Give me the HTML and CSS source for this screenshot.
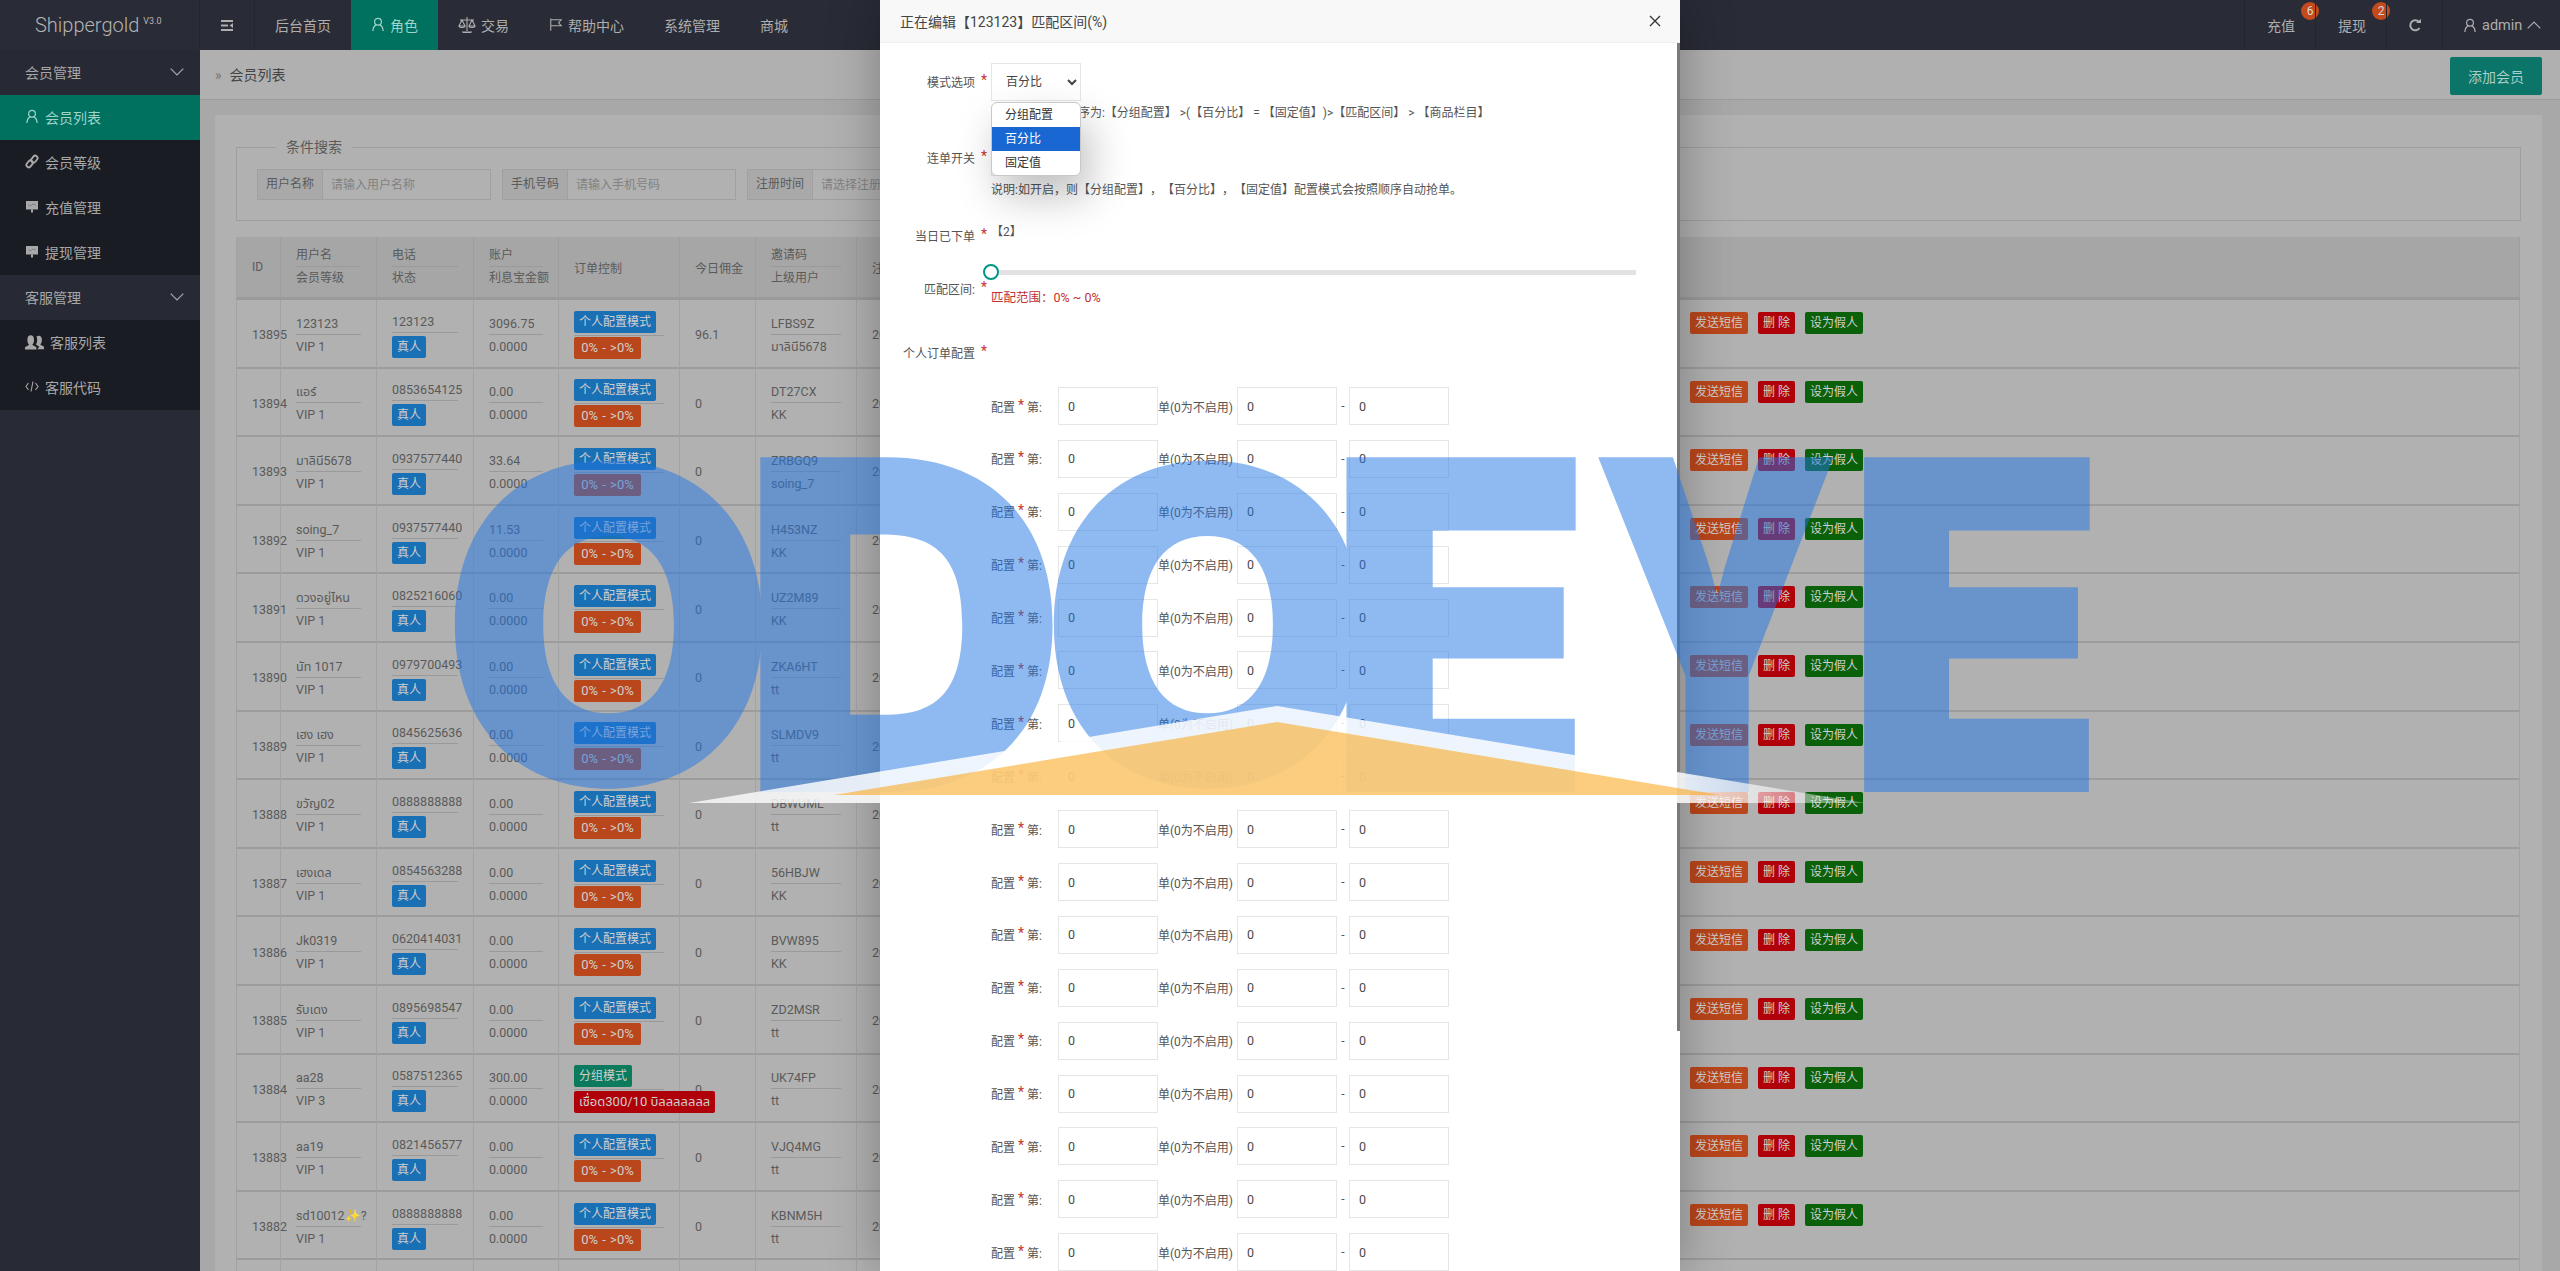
FILE: index.html
```html
<!DOCTYPE html>
<html lang="zh-CN">
<head>
  <meta charset="UTF-8" />
  <title>Shippergold - 会员列表</title>
  <link rel="stylesheet" href="styles.css">
</head>
<body>
  <svg class="icon-defs" width="0" height="0">
    <symbol id="i-user" viewBox="0 0 14 16"><circle cx="7" cy="5" r="3.6" fill="none" stroke="currentColor" stroke-width="1.3"/><path d="M1.5 15c.3-3.6 2-6 3.6-6.6M12.5 15c-.3-3.6-2-6-3.6-6.6" fill="none" stroke="currentColor" stroke-width="1.3"/></symbol>
    <symbol id="i-link" viewBox="0 0 14 16"><g fill="none" stroke="currentColor" stroke-width="2"><rect x="7" y="1.5" width="5" height="8" rx="2.5" transform="rotate(38 9.5 5.5)"/><rect x="2" y="6.5" width="5" height="8" rx="2.5" transform="rotate(38 4.5 10.5)"/></g></symbol>
    <symbol id="i-board" viewBox="0 0 14 14"><rect x="1" y="1.5" width="12" height="8.5" fill="currentColor"/><path d="M3 5l2 1.5 3-2 3 1" fill="none" stroke="#777" stroke-width=".8"/><rect x="6" y="10" width="2" height="3" fill="currentColor"/></symbol>
    <symbol id="i-users" viewBox="0 0 20 16"><path d="M0 16v-2.500l4.500-2.500c-1.500-1.500-2-3-2-5.500C2.500 2.500 4 1 6 1s3.500 1.500 3.500 4.500c0 2.500-.5 4-2 5.500l4.500 2.500V16z" fill="currentColor"/><path d="M13 15.500h7V13l-4-2.300c1.300-1.400 1.800-2.800 1.800-5C17.800 3 16.400 1.500 14.500 1.500c-1 0-1.800.4-2.400 1 .5 1 .7 2 .7 3.200 0 2-.4 3.500-1.300 4.900l3.500 2.400z" fill="currentColor"/></symbol>
    <symbol id="i-code" viewBox="0 0 14 12"><path d="M3.500 2.500L1 6l2.500 3.500M10.500 2.500L13 6l-2.500 3.500M8 1L6 11" fill="none" stroke="currentColor" stroke-width="1.100"/></symbol>
    <symbol id="i-scale" viewBox="0 0 18 18"><g fill="none" stroke="currentColor" stroke-width="1.100"><path d="M9 1v14M5 16.500h8M2 4h14M4 4L1 10h6zM14 4l-3 6h6z"/><path d="M1 10c.5 2 5.500 2 6 0M11 10c.5 2 5.500 2 6 0M4 16h10"/></g></symbol>
    <symbol id="i-flag" viewBox="0 0 16 16"><path d="M2 1v14M2 2.500h12l-3 3.500 3 3.500H2" fill="none" stroke="currentColor" stroke-width="1.200"/></symbol>
    <symbol id="i-menu" viewBox="0 0 14 14"><path d="M1 2.500h12M1 7h7M1 11.500h12" fill="none" stroke="currentColor" stroke-width="2"/><path d="M13 4.500L9.500 7l3.500 2.500z" fill="currentColor"/></symbol>
    <symbol id="i-refresh" viewBox="0 0 14 14"><path d="M11.500 9.500A5 5 0 1 1 11 3.500" fill="none" stroke="currentColor" stroke-width="2"/><path d="M8 4.500h5v-4z" fill="currentColor"/></symbol>
    <symbol id="i-down" viewBox="0 0 14 8"><path d="M.7 .7L7 7 13.300 .7" fill="none" stroke="currentColor" stroke-width="1.200"/></symbol>
    <symbol id="i-up" viewBox="0 0 14 8"><path d="M.7 7.300L7 1l6.300 6.300" fill="none" stroke="currentColor" stroke-width="1.200"/></symbol>
    <symbol id="i-close" viewBox="0 0 12 12"><path d="M1 1l10 10M11 1L1 11" fill="none" stroke="currentColor" stroke-width="1.300"/></symbol>
  </svg>

  <header class="topbar">
    <div class="logo">Shippergold<sup>V3.0</sup></div>
    <a class="nav-toggle"><svg class="ic-14"><use href="#i-menu"/></svg></a>
    <nav class="nav">
      <a>后台首页</a>
      <a class="active"><svg class="ic-14"><use href="#i-user"/></svg>角色</a>
      <a><svg class="ic-18"><use href="#i-scale"/></svg>交易</a>
      <a><svg class="ic-14"><use href="#i-flag"/></svg>帮助中心</a>
      <a>系统管理</a>
      <a>商城</a>
    </nav>
    <div class="top-right">
      <a class="top-link">充值<span class="dot">6</span></a>
      <a class="top-link">提现<span class="dot">2</span></a>
      <a class="top-link refresh"><svg class="ic-14"><use href="#i-refresh"/></svg></a>
      <a class="top-user"><svg class="ic-14"><use href="#i-user"/></svg>admin<svg class="ic-chev"><use href="#i-up"/></svg></a>
    </div>
  </header>

  <div class="main">
    <aside class="sidebar">
      <div class="side-group">会员管理<svg class="ic-chev"><use href="#i-down"/></svg></div>
      <a class="side-item active"><svg class="ic-14"><use href="#i-user"/></svg>会员列表</a>
      <a class="side-item"><svg class="ic-14"><use href="#i-link"/></svg>会员等级</a>
      <a class="side-item"><svg class="ic-14"><use href="#i-board"/></svg>充值管理</a>
      <a class="side-item"><svg class="ic-14"><use href="#i-board"/></svg>提现管理</a>
      <div class="side-group">客服管理<svg class="ic-chev"><use href="#i-down"/></svg></div>
      <a class="side-item"><svg class="ic-20"><use href="#i-users"/></svg>客服列表</a>
      <a class="side-item"><svg class="ic-14"><use href="#i-code"/></svg>客服代码</a>
    </aside>

    <main class="content">
      <div class="crumb">
        <span class="crumb-text"><i>»</i>会员列表</span>
        <button class="btn-add">添加会员</button>
      </div>

      <section class="card">
        <fieldset class="search">
          <legend>条件搜索</legend>
          <div class="search-row">
            <div class="search-group"><label>用户名称</label><input placeholder="请输入用户名称"></div>
            <div class="search-group"><label>手机号码</label><input placeholder="请输入手机号码"></div>
            <div class="search-group"><label>注册时间</label><input placeholder="请选择注册时间"></div>
          </div>
        </fieldset>

        <table class="members">
          <colgroup>
            <col class="c-id"><col class="c-name"><col class="c-phone"><col class="c-acc"><col class="c-order"><col class="c-today"><col class="c-code"><col class="c-reg"><col>
          </colgroup>
          <thead>
            <tr>
              <th>ID</th>
              <th><div class="pair"><div>用户名</div><div>会员等级</div></div></th>
              <th><div class="pair"><div>电话</div><div>状态</div></div></th>
              <th><div class="pair"><div>账户</div><div>利息宝金额</div></div></th>
              <th>订单控制</th>
              <th>今日佣金</th>
              <th><div class="pair"><div>邀请码</div><div>上级用户</div></div></th>
              <th>注册时间</th>
              <th></th>
            </tr>
          </thead>
          <tbody>
            <tr><td>13895</td><td><div class="pair"><div>123123</div><div>VIP 1</div></div></td><td><div class="phone"><div>123123</div><span class="tag blue">真人</span></div></td><td><div class="pair"><div>3096.75</div><div>0.0000</div></div></td><td><div class="modes"><div><span class="tag blue">个人配置模式</span></div><span class="tag orange">0% - &gt;0%</span></div></td><td>96.1</td><td><div class="pair"><div>LFBS9Z</div><div>มาลินี5678</div></div></td><td>2025-03-18</td><td class="ops"><span class="tag orange">发送短信</span><span class="tag red">删 除</span><span class="tag green">设为假人</span></td></tr>
            <tr><td>13894</td><td><div class="pair"><div>แอร์</div><div>VIP 1</div></div></td><td><div class="phone"><div>0853654125</div><span class="tag blue">真人</span></div></td><td><div class="pair"><div>0.00</div><div>0.0000</div></div></td><td><div class="modes"><div><span class="tag blue">个人配置模式</span></div><span class="tag orange">0% - &gt;0%</span></div></td><td>0</td><td><div class="pair"><div>DT27CX</div><div>KK</div></div></td><td>2025-03-18</td><td class="ops"><span class="tag orange">发送短信</span><span class="tag red">删 除</span><span class="tag green">设为假人</span></td></tr>
            <tr><td>13893</td><td><div class="pair"><div>มาลินี5678</div><div>VIP 1</div></div></td><td><div class="phone"><div>0937577440</div><span class="tag blue">真人</span></div></td><td><div class="pair"><div>33.64</div><div>0.0000</div></div></td><td><div class="modes"><div><span class="tag blue">个人配置模式</span></div><span class="tag orange">0% - &gt;0%</span></div></td><td>0</td><td><div class="pair"><div>ZRBGQ9</div><div>soing_7</div></div></td><td>2025-03-18</td><td class="ops"><span class="tag orange">发送短信</span><span class="tag red">删 除</span><span class="tag green">设为假人</span></td></tr>
            <tr><td>13892</td><td><div class="pair"><div>soing_7</div><div>VIP 1</div></div></td><td><div class="phone"><div>0937577440</div><span class="tag blue">真人</span></div></td><td><div class="pair"><div>11.53</div><div>0.0000</div></div></td><td><div class="modes"><div><span class="tag blue">个人配置模式</span></div><span class="tag orange">0% - &gt;0%</span></div></td><td>0</td><td><div class="pair"><div>H453NZ</div><div>KK</div></div></td><td>2025-03-18</td><td class="ops"><span class="tag orange">发送短信</span><span class="tag red">删 除</span><span class="tag green">设为假人</span></td></tr>
            <tr><td>13891</td><td><div class="pair"><div>ดวงอยู่ไหน</div><div>VIP 1</div></div></td><td><div class="phone"><div>0825216060</div><span class="tag blue">真人</span></div></td><td><div class="pair"><div>0.00</div><div>0.0000</div></div></td><td><div class="modes"><div><span class="tag blue">个人配置模式</span></div><span class="tag orange">0% - &gt;0%</span></div></td><td>0</td><td><div class="pair"><div>UZ2M89</div><div>KK</div></div></td><td>2025-03-18</td><td class="ops"><span class="tag orange">发送短信</span><span class="tag red">删 除</span><span class="tag green">设为假人</span></td></tr>
            <tr><td>13890</td><td><div class="pair"><div>นัท 1017</div><div>VIP 1</div></div></td><td><div class="phone"><div>0979700493</div><span class="tag blue">真人</span></div></td><td><div class="pair"><div>0.00</div><div>0.0000</div></div></td><td><div class="modes"><div><span class="tag blue">个人配置模式</span></div><span class="tag orange">0% - &gt;0%</span></div></td><td>0</td><td><div class="pair"><div>ZKA6HT</div><div>tt</div></div></td><td>2025-03-18</td><td class="ops"><span class="tag orange">发送短信</span><span class="tag red">删 除</span><span class="tag green">设为假人</span></td></tr>
            <tr><td>13889</td><td><div class="pair"><div>เฮง เฮง</div><div>VIP 1</div></div></td><td><div class="phone"><div>0845625636</div><span class="tag blue">真人</span></div></td><td><div class="pair"><div>0.00</div><div>0.0000</div></div></td><td><div class="modes"><div><span class="tag blue">个人配置模式</span></div><span class="tag orange">0% - &gt;0%</span></div></td><td>0</td><td><div class="pair"><div>SLMDV9</div><div>tt</div></div></td><td>2025-03-18</td><td class="ops"><span class="tag orange">发送短信</span><span class="tag red">删 除</span><span class="tag green">设为假人</span></td></tr>
            <tr><td>13888</td><td><div class="pair"><div>ขวัญ02</div><div>VIP 1</div></div></td><td><div class="phone"><div>0888888888</div><span class="tag blue">真人</span></div></td><td><div class="pair"><div>0.00</div><div>0.0000</div></div></td><td><div class="modes"><div><span class="tag blue">个人配置模式</span></div><span class="tag orange">0% - &gt;0%</span></div></td><td>0</td><td><div class="pair"><div>DBWUML</div><div>tt</div></div></td><td>2025-03-18</td><td class="ops"><span class="tag orange">发送短信</span><span class="tag red">删 除</span><span class="tag green">设为假人</span></td></tr>
            <tr><td>13887</td><td><div class="pair"><div>เฮงเดล</div><div>VIP 1</div></div></td><td><div class="phone"><div>0854563288</div><span class="tag blue">真人</span></div></td><td><div class="pair"><div>0.00</div><div>0.0000</div></div></td><td><div class="modes"><div><span class="tag blue">个人配置模式</span></div><span class="tag orange">0% - &gt;0%</span></div></td><td>0</td><td><div class="pair"><div>56HBJW</div><div>KK</div></div></td><td>2025-03-18</td><td class="ops"><span class="tag orange">发送短信</span><span class="tag red">删 除</span><span class="tag green">设为假人</span></td></tr>
            <tr><td>13886</td><td><div class="pair"><div>Jk0319</div><div>VIP 1</div></div></td><td><div class="phone"><div>0620414031</div><span class="tag blue">真人</span></div></td><td><div class="pair"><div>0.00</div><div>0.0000</div></div></td><td><div class="modes"><div><span class="tag blue">个人配置模式</span></div><span class="tag orange">0% - &gt;0%</span></div></td><td>0</td><td><div class="pair"><div>BVW895</div><div>KK</div></div></td><td>2025-03-18</td><td class="ops"><span class="tag orange">发送短信</span><span class="tag red">删 除</span><span class="tag green">设为假人</span></td></tr>
            <tr><td>13885</td><td><div class="pair"><div>รับเดง</div><div>VIP 1</div></div></td><td><div class="phone"><div>0895698547</div><span class="tag blue">真人</span></div></td><td><div class="pair"><div>0.00</div><div>0.0000</div></div></td><td><div class="modes"><div><span class="tag blue">个人配置模式</span></div><span class="tag orange">0% - &gt;0%</span></div></td><td>0</td><td><div class="pair"><div>ZD2MSR</div><div>tt</div></div></td><td>2025-03-18</td><td class="ops"><span class="tag orange">发送短信</span><span class="tag red">删 除</span><span class="tag green">设为假人</span></td></tr>
            <tr><td>13884</td><td><div class="pair"><div>aa28</div><div>VIP 3</div></div></td><td><div class="phone"><div>0587512365</div><span class="tag blue">真人</span></div></td><td><div class="pair"><div>300.00</div><div>0.0000</div></div></td><td><div class="modes"><div><span class="tag teal">分组模式</span></div><span class="tag red over">เชื่อด300/10 บิลลลลลลล</span></div></td><td>0</td><td><div class="pair"><div>UK74FP</div><div>tt</div></div></td><td>2025-03-18</td><td class="ops"><span class="tag orange">发送短信</span><span class="tag red">删 除</span><span class="tag green">设为假人</span></td></tr>
            <tr><td>13883</td><td><div class="pair"><div>aa19</div><div>VIP 1</div></div></td><td><div class="phone"><div>0821456577</div><span class="tag blue">真人</span></div></td><td><div class="pair"><div>0.00</div><div>0.0000</div></div></td><td><div class="modes"><div><span class="tag blue">个人配置模式</span></div><span class="tag orange">0% - &gt;0%</span></div></td><td>0</td><td><div class="pair"><div>VJQ4MG</div><div>tt</div></div></td><td>2025-03-18</td><td class="ops"><span class="tag orange">发送短信</span><span class="tag red">删 除</span><span class="tag green">设为假人</span></td></tr>
            <tr><td>13882</td><td><div class="pair"><div>sd10012✨?</div><div>VIP 1</div></div></td><td><div class="phone"><div>0888888888</div><span class="tag blue">真人</span></div></td><td><div class="pair"><div>0.00</div><div>0.0000</div></div></td><td><div class="modes"><div><span class="tag blue">个人配置模式</span></div><span class="tag orange">0% - &gt;0%</span></div></td><td>0</td><td><div class="pair"><div>KBNM5H</div><div>tt</div></div></td><td>2025-03-18</td><td class="ops"><span class="tag orange">发送短信</span><span class="tag red">删 除</span><span class="tag green">设为假人</span></td></tr>
            <tr><td>13881</td><td><div class="pair"><div>aa18</div><div>VIP 1</div></div></td><td><div class="phone"><div>0888888888</div><span class="tag blue">真人</span></div></td><td><div class="pair"><div>0.00</div><div>0.0000</div></div></td><td><div class="modes"><div><span class="tag blue">个人配置模式</span></div><span class="tag orange">0% - &gt;0%</span></div></td><td>0</td><td><div class="pair"><div>KBNM5H</div><div>tt</div></div></td><td>2025-03-18</td><td class="ops"><span class="tag orange">发送短信</span><span class="tag red">删 除</span><span class="tag green">设为假人</span></td></tr>
          </tbody>
        </table>
      </section>
    </main>
  </div>

  <!-- edit dialog -->
  <div class="modal">
    <div class="modal-title">
      <span>正在编辑【123123】匹配区间(%)</span>
      <svg class="ic-close"><use href="#i-close"/></svg>
    </div>
    <div class="modal-scrollbar"></div>
    <form class="modal-body">
      <div class="form-item item-mode">
        <label class="form-label">模式选项<b>*</b></label>
        <div class="form-field">
          <select class="ctl-select"><option>百分比</option></select>
          <p class="note note-mode">说明:优先等级顺序为:【分组配置】 &gt;(【百分比】 = 【固定值】)&gt;【匹配区间】 &gt; 【商品栏目】</p>
        </div>
      </div>
      <div class="form-item item-chain">
        <label class="form-label">连单开关<b>*</b></label>
        <div class="form-field">
          <select class="ctl-select small"><option>关闭</option></select>
          <p class="note note-chain">说明:如开启，则【分组配置】，【百分比】，【固定值】配置模式会按照顺序自动抢单。</p>
        </div>
      </div>
      <div class="form-item item-today">
        <label class="form-label">当日已下单<b>*</b></label>
        <div class="form-field today-value">【2】</div>
      </div>
      <div class="form-item item-range">
        <label class="form-label">匹配区间:<b>*</b></label>
        <div class="form-field">
          <div class="slider"><span class="slider-handle"></span></div>
          <p class="range-text">匹配范围：0% ~ 0%</p>
        </div>
      </div>
      <div class="form-item item-personal">
        <label class="form-label">个人订单配置<b>*</b></label>
      </div>

      <div class="cfg-row"><span class="cfg-label">配置<b>*</b>第:</span><input value="0"><span class="cfg-unit">单(0为不启用)</span><input value="0"><span class="cfg-dash">-</span><input value="0"></div>
      <div class="cfg-row"><span class="cfg-label">配置<b>*</b>第:</span><input value="0"><span class="cfg-unit">单(0为不启用)</span><input value="0"><span class="cfg-dash">-</span><input value="0"></div>
      <div class="cfg-row"><span class="cfg-label">配置<b>*</b>第:</span><input value="0"><span class="cfg-unit">单(0为不启用)</span><input value="0"><span class="cfg-dash">-</span><input value="0"></div>
      <div class="cfg-row"><span class="cfg-label">配置<b>*</b>第:</span><input value="0"><span class="cfg-unit">单(0为不启用)</span><input value="0"><span class="cfg-dash">-</span><input value="0"></div>
      <div class="cfg-row"><span class="cfg-label">配置<b>*</b>第:</span><input value="0"><span class="cfg-unit">单(0为不启用)</span><input value="0"><span class="cfg-dash">-</span><input value="0"></div>
      <div class="cfg-row"><span class="cfg-label">配置<b>*</b>第:</span><input value="0"><span class="cfg-unit">单(0为不启用)</span><input value="0"><span class="cfg-dash">-</span><input value="0"></div>
      <div class="cfg-row"><span class="cfg-label">配置<b>*</b>第:</span><input value="0"><span class="cfg-unit">单(0为不启用)</span><input value="0"><span class="cfg-dash">-</span><input value="0"></div>
      <div class="cfg-row"><span class="cfg-label">配置<b>*</b>第:</span><input value="0"><span class="cfg-unit">单(0为不启用)</span><input value="0"><span class="cfg-dash">-</span><input value="0"></div>
      <div class="cfg-row"><span class="cfg-label">配置<b>*</b>第:</span><input value="0"><span class="cfg-unit">单(0为不启用)</span><input value="0"><span class="cfg-dash">-</span><input value="0"></div>
      <div class="cfg-row"><span class="cfg-label">配置<b>*</b>第:</span><input value="0"><span class="cfg-unit">单(0为不启用)</span><input value="0"><span class="cfg-dash">-</span><input value="0"></div>
      <div class="cfg-row"><span class="cfg-label">配置<b>*</b>第:</span><input value="0"><span class="cfg-unit">单(0为不启用)</span><input value="0"><span class="cfg-dash">-</span><input value="0"></div>
      <div class="cfg-row"><span class="cfg-label">配置<b>*</b>第:</span><input value="0"><span class="cfg-unit">单(0为不启用)</span><input value="0"><span class="cfg-dash">-</span><input value="0"></div>
      <div class="cfg-row"><span class="cfg-label">配置<b>*</b>第:</span><input value="0"><span class="cfg-unit">单(0为不启用)</span><input value="0"><span class="cfg-dash">-</span><input value="0"></div>
      <div class="cfg-row"><span class="cfg-label">配置<b>*</b>第:</span><input value="0"><span class="cfg-unit">单(0为不启用)</span><input value="0"><span class="cfg-dash">-</span><input value="0"></div>
      <div class="cfg-row"><span class="cfg-label">配置<b>*</b>第:</span><input value="0"><span class="cfg-unit">单(0为不启用)</span><input value="0"><span class="cfg-dash">-</span><input value="0"></div>
      <div class="cfg-row"><span class="cfg-label">配置<b>*</b>第:</span><input value="0"><span class="cfg-unit">单(0为不启用)</span><input value="0"><span class="cfg-dash">-</span><input value="0"></div>
      <div class="cfg-row"><span class="cfg-label">配置<b>*</b>第:</span><input value="0"><span class="cfg-unit">单(0为不启用)</span><input value="0"><span class="cfg-dash">-</span><input value="0"></div>
    </form>

    <ul class="select-menu">
      <li>分组配置</li>
      <li class="selected">百分比</li>
      <li>固定值</li>
    </ul>
  </div>

  <!-- stamp across the page -->
  <div class="stamp"><span class="s-o1">O</span><span class="s-d">D</span><span class="s-o2">O</span><span class="s-e1">E</span><span class="s-y">Y</span><span class="s-e2">E</span></div>
  <svg class="stamp-roof" viewBox="0 0 2560 1271">
    <defs>
      <linearGradient id="roof-fade" gradientUnits="userSpaceOnUse" x1="689" y1="0" x2="1865" y2="0">
        <stop offset="0" stop-color="#fff" stop-opacity="0.75"/>
        <stop offset="0.16" stop-color="#fff" stop-opacity="0.85"/>
        <stop offset="0.84" stop-color="#fff" stop-opacity="0.85"/>
        <stop offset="1" stop-color="#fff" stop-opacity="0.3"/>
      </linearGradient>
    </defs>
    <polygon class="roof-white" points="689,803 1277,706 1865,803"/>
    <polygon class="roof-orange" points="834,795 1277,722 1720,795"/>
  </svg>
</body>
</html>
```

FILE: styles.css
```css
* {
  box-sizing: border-box;
}

html, body {
  height: 100%;
}

body {
  margin: 0;
  position: relative;
  overflow: hidden;
  background: #a8a8a8;
  color: #5a5a5a;
  font-family: Roboto, "Noto Sans CJK SC", "Noto Sans Thai", sans-serif;
  font-size: 12px;
  text-spacing-trim: space-all;
}

a {
  color: inherit;
  text-decoration: none;
}

.icon-defs {
  position: absolute;
}

.ic-14 { width: 14px; height: 15px; flex: none; }
.ic-18 { width: 18px; height: 18px; flex: none; }
.ic-20 { width: 19px; height: 16px; flex: none; }
.ic-chev { width: 14px; height: 8px; flex: none; }

/* top bar */
.topbar {
  display: flex;
  height: 50px;
  background: #292b36;
  color: #aeaeae;
  font-size: 14px;
}

.logo {
  width: 200px;
  padding-left: 35px;
  line-height: 50px;
  font-size: 20px;
  font-weight: 300;
  color: #b4b4b4;
  border-right: 1px solid #24262f;
}

.logo sup {
  margin-left: 4px;
  font-size: 9px;
  font-weight: 400;
  line-height: 0;
  vertical-align: 8px;
}

.nav-toggle {
  display: flex;
  align-items: center;
  justify-content: center;
  width: 55px;
  border-right: 1px solid #24262f;
}

.nav {
  display: flex;
}

.nav a {
  display: flex;
  align-items: center;
  gap: 5px;
  padding: 0 20px 1px;
}

.nav a.active {
  background: #00715f;
  color: #9fd4c8;
}

.top-right {
  display: flex;
  margin-left: auto;
}

.top-link {
  position: relative;
  display: flex;
  align-items: center;
  width: 71px;
  padding-left: 22px;
  border-left: 1px solid #24262f;
}

.top-link.refresh {
  width: 56px;
  padding-left: 21px;
}

.dot {
  position: absolute;
  top: 2px;
  left: 56px;
  width: 18px;
  height: 18px;
  border-radius: 50%;
  background: #c24a1c;
  color: #d8d8d8;
  font-size: 12px;
  line-height: 18px;
  text-align: center;
}

.top-user {
  display: flex;
  align-items: center;
  gap: 5px;
  width: 118px;
  padding-left: 20px;
  border-left: 1px solid #24262f;
  font-size: 14.500px;
}

/* sidebar */
.main {
  display: flex;
  height: calc(100% - 50px);
}

.sidebar {
  width: 200px;
  flex: none;
  background: #282b36;
  color: #a8a8a8;
  font-size: 14px;
}

.side-group {
  display: flex;
  align-items: center;
  justify-content: space-between;
  height: 45px;
  padding: 0 16px 2px 25px;
  background: #272a34;
}

.side-item {
  display: flex;
  align-items: center;
  gap: 6px;
  height: 45px;
  padding: 0 0 2px 25px;
  background: #1a1c23;
}

.side-item.active {
  background: #00715f;
  color: #9fd4c8;
}

/* content */
.content {
  flex: 1;
  min-width: 0;
}

.crumb {
  display: flex;
  align-items: center;
  justify-content: space-between;
  height: 50px;
  padding: 0 18px 0 15px;
  background: #b0b0b0;
  border-bottom: 1px solid #9d9d9d;
  font-size: 14px;
  color: #444;
}

.crumb-text {
  margin-bottom: 1px;
}

.crumb-text i {
  margin-right: 8px;
  font-style: normal;
  color: #777;
}

.btn-add {
  width: 92px;
  height: 38px;
  margin-top: 2px;
  border: 0;
  border-radius: 2px;
  background: #0a7568;
  color: #a8cfc8;
  font: inherit;
}

.card {
  margin: 15px 18px 0 15px;
  padding: 22px 21px 0;
  background: #b1b1b1;
}

.search {
  margin: 0;
  padding: 12px 20px 20px;
  border: 1px solid #9e9e9e;
}

.search legend {
  margin-left: 19px;
  padding: 0 10px;
  line-height: 20px;
  font-size: 14px;
}

.search-row {
  display: flex;
  gap: 11px;
}

.search-group {
  display: flex;
  width: 234px;
  height: 31px;
  border: 1px solid #a0a0a0;
}

.search-group label {
  width: 65px;
  flex: none;
  line-height: 29px;
  text-align: center;
  background: #a9a9a9;
  border-right: 1px solid #a0a0a0;
}

.search-group input {
  flex: 1;
  min-width: 0;
  padding: 0 8px;
  border: 0;
  background: transparent;
  font: inherit;
}

.search-group input::placeholder {
  color: #828282;
}

/* member table */
.members {
  width: 2284px;
  margin-top: 16px;
  table-layout: fixed;
  border-collapse: separate;
  border-spacing: 0;
  font-size: 12.500px;
}

.c-id { width: 45px; }
.c-name { width: 96px; }
.c-phone { width: 97px; }
.c-acc { width: 85px; }
.c-order { width: 121px; }
.c-today { width: 76px; }
.c-code { width: 101px; }
.c-reg { width: 818px; }

.members th {
  height: 63px;
  padding: 0 15px;
  background: #a6a6a6;
  border-right: 1px solid #9e9e9e;
  border-bottom: 3px solid #9a9a9a;
  font-weight: 400;
  font-size: 12px;
  text-align: left;
  white-space: nowrap;
}

.members td {
  height: 68.600px;
  padding: 3px 15px 0;
  border-right: 1px solid #a3a3a3;
  border-bottom: 2px solid #9c9c9c;
  white-space: nowrap;
}

.members td:first-child,
.members th:first-child {
  border-left: 1px solid #a3a3a3;
}

.members td:first-child {
  padding-right: 0;
}

.pair > div {
  height: 23px;
  line-height: 23px;
}

.pair > div:first-child,
.phone > div:first-child,
.modes > div:first-child {
  border-bottom: 1px solid #9a9a9a;
}

.phone {
  margin-top: -1px;
}

.phone > div:first-child {
  height: 22px;
  line-height: 21px;
  margin-bottom: 3px;
}

.modes > div:first-child {
  height: 25px;
  margin-bottom: 1px;
}

.tag {
  display: inline-block;
  height: 22px;
  padding: 0 5px;
  border-radius: 2px;
  font-size: 12px;
  line-height: 22px;
  color: #cfcfcf;
}

.tag.blue { background: #1a70b4; }
.tag.orange { background: #ba461b; }
.tag.red { background: #b0000a; }
.tag.green { background: #0b6109; }
.tag.teal { background: #0c7a5c; }

.modes .tag.orange {
  min-width: 67px;
  font-size: 13px;
  text-align: center;
  word-spacing: 1px;
}

.tag.over {
  position: relative;
  z-index: 1;
  font-size: 13px;
}

.phone .tag {
  display: block;
  width: 34px;
}

.ops {
  vertical-align: top;
  padding-top: 12px !important;
}

.ops .tag {
  margin-right: 10px;
}

/* dialog */
.modal {
  position: absolute;
  top: 0;
  left: 880px;
  width: 800px;
  height: 100%;
  overflow: hidden;
  background: #fff;
  color: #555;
  box-shadow: 1px 1px 50px rgba(0, 0, 0, 0.3);
}

.modal-title {
  display: flex;
  align-items: center;
  justify-content: space-between;
  height: 43px;
  padding: 0 19px 0 20px;
  background: #f8f8f8;
  border-bottom: 1px solid #eee;
  font-size: 14px;
  color: #444;
}

.ic-close {
  width: 12px;
  height: 12px;
  color: #333;
}

.modal-scrollbar {
  position: absolute;
  top: 43px;
  right: 0;
  width: 3px;
  height: 988px;
  background: #7a7a7a;
}

.modal-body {
  padding-top: 20px;
}

.form-item {
  display: flex;
}

.form-label {
  display: flex;
  justify-content: flex-end;
  width: 111px;
  flex: none;
  padding-right: 4px;
  line-height: 20px;
}

.form-label b,
.cfg-label b {
  margin: 0 0 0 6px;
  color: #c4342c;
  font-weight: 400;
  font-size: 14px;
  line-height: 14px;
}

.form-field {
  flex: 1;
}

.ctl-select {
  display: block;
  width: 90px;
  height: 38px;
  padding-left: 10px;
  background: #fff;
  border: 1px solid #e6e6e6;
  color: #444;
  font-family: inherit;
  font-size: 12px;
}

.ctl-select.small {
  width: 67px;
}

.note {
  margin: 0;
  line-height: 20px;
  white-space: nowrap;
}

.note-mode { margin-top: 2px; }
.note-chain { margin-top: 4px; }

.item-mode .form-label { margin-top: 10px; }
.item-chain { margin-top: 15px; }
.item-chain .form-label { margin-top: 11px; }
.item-today { margin-top: 22px; }
.item-today .form-label { margin-top: 5px; }
.today-value { line-height: 20px; }

.item-range { margin-top: 15px; }
.item-range .form-label { margin-top: 18px; }

.slider {
  position: relative;
  width: 645px;
  height: 5px;
  margin-top: 8px;
  background: #e2e2e2;
}

.slider-handle {
  position: absolute;
  top: -6px;
  left: -8px;
  width: 16px;
  height: 16px;
  border: 2px solid #009688;
  border-radius: 50%;
  background: #fff;
}

.range-text {
  margin: 13px 0 0;
  line-height: 20px;
  font-size: 12.500px;
  color: #c23030;
}

.item-personal { margin-top: 36px; }

.cfg-row {
  display: flex;
  align-items: center;
  height: 38px;
  margin-bottom: 14.900px;
  padding-left: 111px;
}

.item-personal + .cfg-row {
  margin-top: 23px;
}

.cfg-label {
  display: flex;
  width: 67px;
  flex: none;
}

.cfg-label b {
  margin: 0 3px;
}

.cfg-unit {
  width: 79px;
  flex: none;
  white-space: nowrap;
}

.cfg-dash {
  width: 12px;
  flex: none;
  text-align: center;
}

.cfg-row input {
  width: 100px;
  height: 38px;
  flex: none;
  padding: 0 9px;
  border: 1px solid #e6e6e6;
  background: transparent;
  color: #4a4a4a;
  font-family: inherit;
  font-size: 12.500px;
}

.select-menu {
  position: absolute;
  top: 102px;
  left: 111px;
  width: 90px;
  margin: 0;
  padding: 0;
  list-style: none;
  overflow: hidden;
  background: #fff;
  border: 1px solid #c8c8c8;
  border-radius: 6px;
  box-shadow: 8px 20px 40px rgba(0, 0, 0, 0.25);
  color: #333;
}

.select-menu li {
  height: 24px;
  padding-left: 13px;
  line-height: 24px;
}

.select-menu .selected {
  background: #1967d2;
  color: #fff;
}

/* stamp */
.stamp {
  position: absolute;
  top: 395px;
  left: 440px;
  display: flex;
  font-family: Inter, sans-serif;
  font-size: 460px;
  font-weight: 900;
  line-height: 1;
  color: #2176e5;
  opacity: 0.5;
  white-space: nowrap;
  pointer-events: none;
}

.stamp span {
  display: block;
  transform-origin: 0 230px;
}

.s-o1 { width: 299px; transform: scale(0.945, 0.955); }
.s-d { width: 300px; transform: scaleX(0.99); }
.s-o2 { width: 287px; transform: scale(0.945, 0.955); }
.s-e1 { width: 265px; transform: scaleX(0.95); }
.s-y { width: 253px; transform: scaleX(0.7); }
.s-e2 { width: 260px; transform: scaleX(0.935); }

.stamp-roof {
  position: absolute;
  top: 0;
  left: 0;
  width: 2560px;
  height: 1271px;
  pointer-events: none;
}

.roof-white {
  fill: url(#roof-fade);
}

.roof-orange {
  fill: #faa414;
  fill-opacity: 0.55;
}
```
